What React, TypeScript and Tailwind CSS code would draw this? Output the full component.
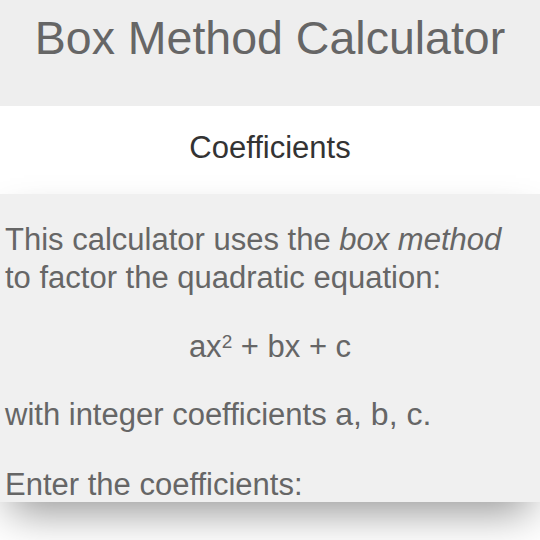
import React from 'react';

const App: React.FC = () => {
    return (
        <div className="w-[540px] h-[540px] overflow-hidden bg-white font-['Liberation_Sans',Arial,sans-serif]">
            {/* Title bar */}
            <div className="h-[106px] bg-[#eeeeee] text-center">
                <h1 className="pt-[10px] text-[46.5px] leading-[56px] text-[#666666]">Box Method Calculator</h1>
            </div>

            {/* Section tab */}
            <div className="h-[88px] bg-white flex items-center justify-center pb-[4px]">
                <h2 className="text-[31px] text-[#333333]">Coefficients</h2>
            </div>

            {/* Content */}
            <div className="h-[308px] overflow-hidden bg-[#f0f0f0] px-[5px] text-[31px] leading-[38px] text-[#666666] shadow-[0_20px_40px_-10px_rgba(0,0,0,0.42)]">
                <p className="mt-[27px] max-w-[515px]">
                    This calculator uses the <em>box method</em> to factor the quadratic equation:
                </p>
                <p className="mt-[31px] text-center">
                    ax<sup className="text-[19px]">2</sup> + bx + c
                </p>
                <p className="mt-[29px]">
                    with integer coefficients <span className="text-[32px]">a, b, c.</span>
                </p>
                <p className="mt-[32px]">Enter the coefficients:</p>
            </div>
        </div>
    );
};

export default App;
